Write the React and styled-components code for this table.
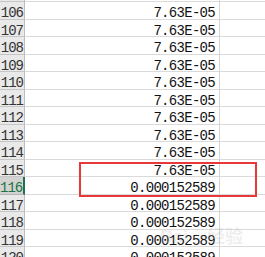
import React from "react";
import styled, { createGlobalStyle } from "styled-components";

const GlobalStyle = createGlobalStyle`
  html, body {
    margin: 0;
    padding: 0;
    background: #ffffff;
    overflow: hidden;
  }
`;

const rows = [];
for (let n = 105; n <= 120; n++) {
  rows.push({ n, value: n <= 115 ? "7.63E-05" : "0.000152589" });
}

export default function App() {
  return (
    <>
      <GlobalStyle />
      <Viewport>
        <Sheet>
          {rows.map((r) => (
            <Row key={r.n}>
              <RowHead selected={r.n === 116}>{r.n}</RowHead>
              <ValueCell>{r.value}</ValueCell>
              <EmptyCell />
            </Row>
          ))}
        </Sheet>
        <Watermark>
          Bai<Paw>❀</Paw>经验
        </Watermark>
        <Highlight />
      </Viewport>
    </>
  );
}

const Viewport = styled.div`
  position: relative;
  width: 265px;
  height: 257px;
  overflow: hidden;
  background: #fff;
`;

const Sheet = styled.div`
  display: flex;
  flex-direction: column;
  margin-top: -15.5px;
`;

const Row = styled.div`
  display: grid;
  grid-template-columns: 25px 195px 1fr;
  height: 17.5px;
  font-family: "Liberation Mono", "DejaVu Sans Mono", monospace;
  font-size: 14px;
  line-height: 17px;
`;

const RowHead = styled.div`
  box-sizing: border-box;
  background: ${(p) => (p.selected ? "#d2d2d2" : "#e9e9e9")};
  color: ${(p) => (p.selected ? "#217346" : "#333")};
  border-bottom: 1px solid ${(p) => (p.selected ? "#b5b5b5" : "#c6c6c6")};
  border-right: ${(p) => (p.selected ? "2px solid #217346" : "1px solid #bdbdbd")};
  text-align: right;
  letter-spacing: -1px;
  padding: 3px 1px 0 0;
  overflow: hidden;
  white-space: nowrap;
`;

const ValueCell = styled.div`
  box-sizing: border-box;
  border-bottom: 1px solid #dadada;
  border-right: 1px solid #d4d4d4;
  color: #111;
  text-align: right;
  letter-spacing: -0.7px;
  padding: 3px 4px 0 0;
  overflow: hidden;
  white-space: nowrap;
`;

const EmptyCell = styled.div`
  box-sizing: border-box;
  border-bottom: 1px solid #dadada;
`;

const Highlight = styled.div`
  position: absolute;
  left: 79px;
  top: 162px;
  width: 178px;
  height: 35px;
  box-sizing: border-box;
  border: 2px solid #e8393a;
`;

const Watermark = styled.div`
  position: absolute;
  left: 160px;
  top: 222px;
  font-family: "Liberation Sans", "Noto Sans CJK SC", sans-serif;
  font-size: 18px;
  font-weight: bold;
  color: rgba(190, 190, 190, 0.25);
  white-space: nowrap;
  pointer-events: none;
`;

const Paw = styled.span`
  font-size: 15px;
  margin: 0 2px;
`;
